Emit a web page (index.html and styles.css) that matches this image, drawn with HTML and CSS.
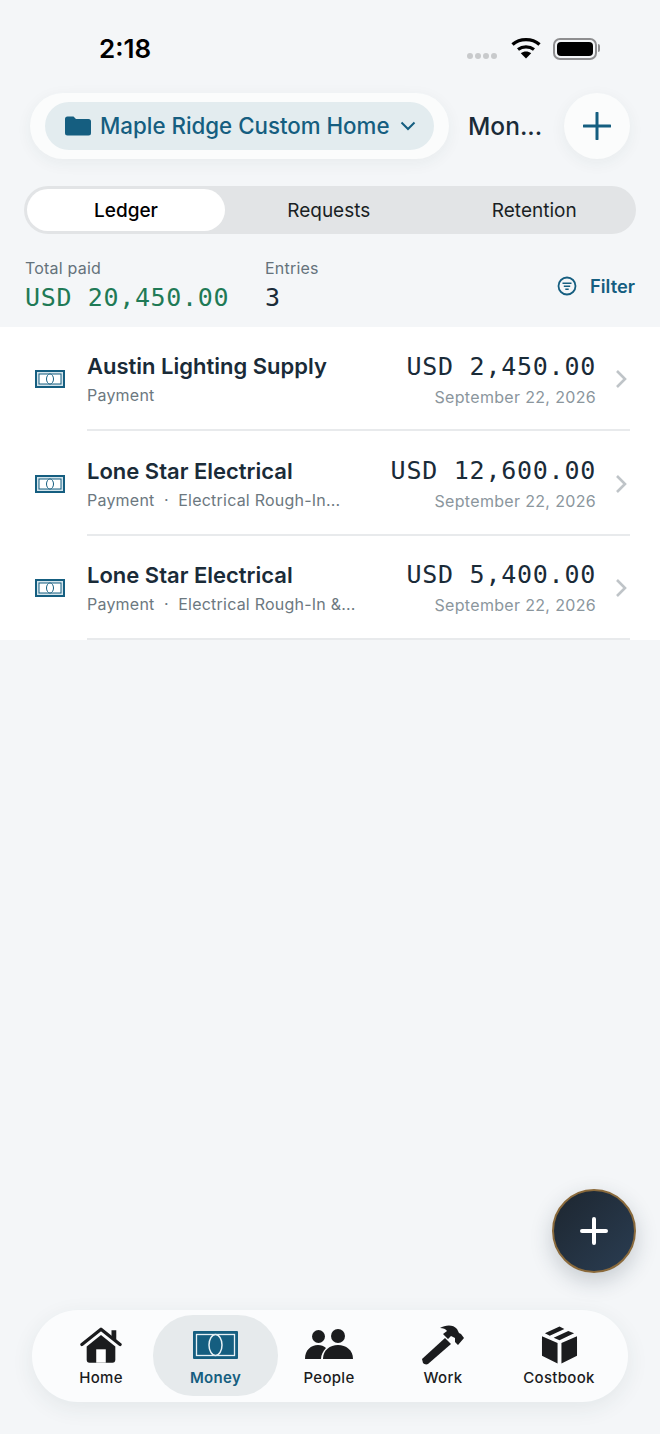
FILE: index.html
```html
<!DOCTYPE html>
<html lang="en">
<head>
    <meta charset="UTF-8">
    <meta name="viewport" content="width=device-width, initial-scale=1.0">
    <title>Money</title>
    <link rel="stylesheet" href="styles.css">
</head>
<body>
    <div class="page">
        <div class="status">
            <span class="time">2:18</span>
            <div class="status-icons">
                <div class="dots"><i></i><i></i><i></i><i></i></div>
                <svg class="wifi" width="30" height="22" viewBox="0 0 30 22">
                    <path d="M1.5 7.5C9 1 21 1 28.5 7.5" fill="none" stroke="#000" stroke-width="3.4"/>
                    <path d="M7 12.5c4.6-3.6 11.4-3.6 16 0" fill="none" stroke="#000" stroke-width="3.2"/>
                    <path d="M9.8 16.2c3-2.2 7.4-2.2 10.4 0L15 21.5z" fill="#000"/>
                </svg>
                <div class="battery"><div class="battery-fill"></div></div>
            </div>
        </div>

        <div class="header">
            <div class="project-wrap">
                <div class="project">
                    <svg class="project-icon" width="26" height="20" viewBox="0 0 26 20"><path d="M0 3a2.500 2.500 0 0 1 2.500-2.500h6l2.500 2.500h12.500A2.500 2.500 0 0 1 26 5.500V17a2.500 2.500 0 0 1-2.500 2.500h-21A2.500 2.500 0 0 1 0 17z" fill="#155e80"/></svg>
                    <span class="project-name">Maple Ridge Custom Home</span>
                    <svg class="project-icon" width="16" height="10" viewBox="0 0 16 10"><path d="M1.500 1.500 8 8l6.500-6.500" fill="none" stroke="#155e80" stroke-width="2"/></svg>
                </div>
            </div>
            <span class="header-title">Mon...</span>
            <div class="add-btn">
                <svg width="28" height="28" viewBox="0 0 28 28"><path d="M14 1v26M1 14h26" stroke="#155e80" stroke-width="3" stroke-linecap="round"/></svg>
            </div>
        </div>

        <div class="tabs">
            <div class="tab active">Ledger</div>
            <div class="tab">Requests</div>
            <div class="tab">Retention</div>
        </div>

        <div class="summary">
            <div class="stat stat-total">
                <span class="stat-label">Total paid</span>
                <span class="mono stat-green">USD 20,450.00</span>
            </div>
            <div class="stat">
                <span class="stat-label">Entries</span>
                <span class="mono stat-count">3</span>
            </div>
            <div class="filter">
                <svg width="20" height="20" viewBox="0 0 20 20"><circle cx="10" cy="10" r="8.500" fill="none" stroke="#155e80" stroke-width="1.800"/><path d="M5.500 7.200h9M6.800 10.200h6.400M8.300 13.200h3.400" stroke="#155e80" stroke-width="1.600"/></svg>
                <span>Filter</span>
            </div>
        </div>

        <div class="list">
            <div class="row">
                <svg class="row-icon" width="30" height="18" viewBox="0 0 30 18"><rect x="1" y="1" width="28" height="16" fill="#d5e5ec" stroke="#155e80" stroke-width="2"/><rect x="4" y="4" width="22" height="10" fill="#fff" stroke="#155e80"/><ellipse cx="15" cy="9" rx="3.500" ry="5" fill="#fff" stroke="#155e80"/></svg>
                <div class="row-body">
                    <div class="row-main">
                        <div class="row-name">Austin Lighting Supply</div>
                        <div class="row-sub">Payment</div>
                    </div>
                    <div class="row-side">
                        <div class="mono row-amount">USD 2,450.00</div>
                        <div class="row-date">September 22, 2026</div>
                    </div>
                    <svg class="chevron" width="13" height="20" viewBox="0 0 13 20"><path d="m2 2 8 8-8 8" fill="none" stroke="#bfc4c8" stroke-width="2.600"/></svg>
                </div>
            </div>
            <div class="row">
                <svg class="row-icon" width="30" height="18" viewBox="0 0 30 18"><rect x="1" y="1" width="28" height="16" fill="#d5e5ec" stroke="#155e80" stroke-width="2"/><rect x="4" y="4" width="22" height="10" fill="#fff" stroke="#155e80"/><ellipse cx="15" cy="9" rx="3.500" ry="5" fill="#fff" stroke="#155e80"/></svg>
                <div class="row-body">
                    <div class="row-main">
                        <div class="row-name">Lone Star Electrical</div>
                        <div class="row-sub">Payment &nbsp;·&nbsp; Electrical Rough-In...</div>
                    </div>
                    <div class="row-side">
                        <div class="mono row-amount">USD 12,600.00</div>
                        <div class="row-date">September 22, 2026</div>
                    </div>
                    <svg class="chevron" width="13" height="20" viewBox="0 0 13 20"><path d="m2 2 8 8-8 8" fill="none" stroke="#bfc4c8" stroke-width="2.600"/></svg>
                </div>
            </div>
            <div class="row">
                <svg class="row-icon" width="30" height="18" viewBox="0 0 30 18"><rect x="1" y="1" width="28" height="16" fill="#d5e5ec" stroke="#155e80" stroke-width="2"/><rect x="4" y="4" width="22" height="10" fill="#fff" stroke="#155e80"/><ellipse cx="15" cy="9" rx="3.500" ry="5" fill="#fff" stroke="#155e80"/></svg>
                <div class="row-body">
                    <div class="row-main">
                        <div class="row-name">Lone Star Electrical</div>
                        <div class="row-sub">Payment &nbsp;·&nbsp; Electrical Rough-In &amp;...</div>
                    </div>
                    <div class="row-side">
                        <div class="mono row-amount">USD 5,400.00</div>
                        <div class="row-date">September 22, 2026</div>
                    </div>
                    <svg class="chevron" width="13" height="20" viewBox="0 0 13 20"><path d="m2 2 8 8-8 8" fill="none" stroke="#bfc4c8" stroke-width="2.600"/></svg>
                </div>
            </div>
        </div>

        <div class="fab">
            <svg width="30" height="30" viewBox="0 0 30 30"><path d="M15 3v24M3 15h24" stroke="#fff" stroke-width="4" stroke-linecap="round"/></svg>
        </div>

        <div class="nav">
            <div class="nav-item">
                <div class="nav-icon"><svg width="42" height="37" viewBox="0 0 44 38"><path d="M2 18 22 2l20 16" fill="none" stroke="#1b1c1e" stroke-width="3.400" stroke-linecap="round" stroke-linejoin="round"/><path d="M33 3h5v11l-5-4z" fill="#1b1c1e"/><path d="M7 20 22 8l15 12v14a3 3 0 0 1-3 3H10a3 3 0 0 1-3-3z" fill="#1b1c1e"/><rect x="17" y="23" width="10" height="14" fill="#fff"/></svg></div>
                <span>Home</span>
            </div>
            <div class="nav-item current">
                <div class="nav-icon"><svg width="45" height="28" viewBox="0 0 45 28"><rect width="45" height="28" rx="1" fill="#155e80"/><rect x="3.500" y="3.500" width="38" height="21" fill="none" stroke="#e8f1f5" stroke-width="1.300"/><ellipse cx="22.500" cy="14" rx="6.500" ry="10.500" fill="#155e80" stroke="#e8f1f5" stroke-width="1.500"/></svg></div>
                <span>Money</span>
            </div>
            <div class="nav-item">
                <div class="nav-icon"><svg width="48" height="32" viewBox="0 0 48 32"><circle cx="13.500" cy="7.500" r="6.500" fill="#1b1c1e"/><circle cx="33" cy="7" r="7" fill="#1b1c1e"/><path d="M0 30c0-9 6-14 13-14 3 0 6 1 8 3-3 3-5 7-5 11z" fill="#1b1c1e"/><path d="M18 30c0-9 7-14 15-14s15 5 15 14z" fill="#1b1c1e"/></svg></div>
                <span>People</span>
            </div>
            <div class="nav-item">
                <div class="nav-icon"><svg width="44" height="40" viewBox="0 0 44 40"><path d="M1 34 24 13l6 6L7 39c-2 1-4 0-5-1z" fill="#1b1c1e"/><path d="M19 3C24 0 32-1 36 4l2 4 2 1 3 4-6 7-3-3v-4l-4-2-3 3-5-5 4-3c-1-2-4-3-7-3z" fill="#1b1c1e"/></svg></div>
                <span>Work</span>
            </div>
            <div class="nav-item">
                <div class="nav-icon"><svg width="37" height="38" viewBox="0 0 38 38"><path d="M19 0 4 7l5 2.500L24 2.500zM28 4.500 13 11.500l6 2.500 15-7zM1 10l16 7v21L1 30zM21 17l16-7v20l-16 8z" fill="#1b1c1e"/></svg></div>
                <span>Costbook</span>
            </div>
        </div>
    </div>
</body>
</html>
```

FILE: styles.css
```css
* {
    box-sizing: border-box;
}
body {
    margin: 0;
    background-color: #f4f6f8;
    font-family: Inter, "Liberation Sans", sans-serif;
    color: #1a2b38;
}
.page {
    position: relative;
    height: 1434px;
    display: flex;
    flex-direction: column;
    overflow: hidden;
}
.mono {
    font-family: "DejaVu Sans Mono", "Liberation Mono", monospace;
}

.status {
    height: 93px;
    padding: 34px 63px 0 99px;
    display: flex;
    justify-content: space-between;
    align-items: flex-start;
}
.time {
    font-size: 26px;
    line-height: 30px;
    font-weight: 600;
    color: #000;
}
.status-icons {
    display: flex;
    align-items: flex-start;
}
.dots {
    display: flex;
    gap: 2px;
    margin: 19px 14px 0 0;
}
.dots i {
    width: 6px;
    height: 6px;
    border-radius: 50%;
    background-color: #c8cacc;
}
.wifi {
    margin: 3px 12px 0 0;
}
.battery {
    position: relative;
    width: 44px;
    height: 22px;
    margin-top: 4px;
    padding: 2px;
    border: 2px solid #8e8e90;
    border-radius: 7px;
}
.battery-fill {
    height: 100%;
    background-color: #000;
    border-radius: 4px;
}
.battery::after {
    content: "";
    position: absolute;
    right: -5px;
    top: 4px;
    width: 2px;
    height: 8px;
    background-color: #8e8e90;
    border-radius: 0 2px 2px 0;
}

.header {
    display: flex;
    align-items: center;
    height: 66px;
    padding: 0 30px;
}
.project-wrap {
    width: 419px;
    height: 66px;
    padding: 9px 15px;
    background-color: #fbfcfc;
    border-radius: 33px;
    box-shadow: 0 4px 16px rgba(40, 60, 70, 0.06);
}
.project {
    height: 48px;
    padding: 0 20px;
    display: flex;
    align-items: center;
    background-color: #e3ecef;
    border-radius: 24px;
    color: #155e80;
}
.project-icon {
    flex: none;
}
.project-name {
    margin: 0 10px 2px 9px;
    font-size: 22.300px;
    font-weight: 500;
    white-space: nowrap;
}
.header-title {
    margin-left: 19px;
    width: 96px;
    font-size: 24.500px;
    font-weight: 500;
}
.add-btn {
    width: 66px;
    height: 66px;
    border-radius: 50%;
    background-color: #fbfcfc;
    display: flex;
    align-items: center;
    justify-content: center;
    box-shadow: 0 4px 16px rgba(40, 60, 70, 0.06);
}

.tabs {
    display: grid;
    grid-template-columns: 198px 1fr 1fr;
    column-gap: 2px;
    height: 48px;
    margin: 27px 24px 0;
    padding: 3px 0 3px 3px;
    background-color: #e2e4e6;
    border-radius: 24px;
}
.tab {
    display: flex;
    align-items: center;
    justify-content: center;
    font-size: 19px;
    color: #1a1f24;
}
.tab.active {
    background-color: #fff;
    border-radius: 21px;
    font-weight: 500;
    color: #000;
}

.summary {
    display: flex;
    align-items: center;
    height: 93px;
    padding: 0 25px 0;
}
.stat {
    display: flex;
    flex-direction: column;
    gap: 4px;
    padding-top: 10px;
}
.stat-total {
    width: 240px;
}
.stat-label {
    font-size: 16px;
    line-height: 20px;
    letter-spacing: 0.2px;
    color: #65727b;
}
.stat-green {
    font-size: 25px;
    line-height: 32px;
    letter-spacing: 0.65px;
    color: #1f7a56;
}
.stat-count {
    font-size: 25px;
    line-height: 32px;
}
.filter {
    margin: 11px 0 0 auto;
    display: flex;
    align-items: center;
    gap: 13px;
    font-size: 18.300px;
    font-weight: 600;
    color: #155e80;
}

.list {
    background-color: #fff;
}
.row {
    display: flex;
    align-items: center;
    height: 104.400px;
    padding: 0 30px 0 35px;
}
.row-icon {
    flex: none;
    margin-right: 22px;
}
.row-body {
    flex: 1;
    height: 100%;
    display: flex;
    align-items: center;
    border-bottom: 2px solid #e8eaec;
}
.row-main {
    flex: 1;
    padding-top: 1px;
}
.row-name {
    font-size: 22px;
    line-height: 30px;
    font-weight: 600;
}
.row-sub {
    margin-top: 3px;
    font-size: 16px;
    line-height: 22px;
    letter-spacing: 0.22px;
    color: #6c7880;
    white-space: nowrap;
}
.row-side {
    text-align: right;
    padding-top: 2px;
}
.row-amount {
    font-size: 25px;
    line-height: 32px;
    letter-spacing: 0.75px;
    white-space: nowrap;
}
.row-date {
    margin-top: 3px;
    font-size: 16px;
    line-height: 22px;
    letter-spacing: 0.33px;
    color: #8b969d;
}
.chevron {
    flex: none;
    margin: 2px 2px 0 19px;
}

.fab {
    position: absolute;
    left: 552px;
    top: 1189px;
    width: 84px;
    height: 84px;
    border-radius: 50%;
    background: linear-gradient(135deg, #1d2630, #2a3d52);
    border: 2px solid #8a6a3c;
    display: flex;
    align-items: center;
    justify-content: center;
    box-shadow: 0 8px 22px rgba(30, 50, 70, 0.22);
}

.nav {
    position: absolute;
    left: 32px;
    top: 1310px;
    width: 596px;
    height: 92px;
    padding: 5px 16px 6px 17px;
    display: grid;
    grid-template-columns: 104px 125px 102px 126px 106px;
    background-color: #fbfcfd;
    border-radius: 46px;
    box-shadow: 0 6px 22px rgba(40, 60, 70, 0.08);
}
.nav-item {
    display: flex;
    flex-direction: column;
    align-items: center;
    padding-top: 8px;
    font-size: 15px;
    font-weight: 500;
    letter-spacing: 0.3px;
    color: #1b1c1e;
}
.nav-icon {
    height: 44px;
    margin-bottom: 1px;
    display: flex;
    align-items: center;
    justify-content: center;
}
.nav-item span {
    line-height: 20px;
}
.nav-item.current {
    background-color: #e6eaec;
    border-radius: 40px;
    font-weight: 600;
    color: #155e80;
}
```
